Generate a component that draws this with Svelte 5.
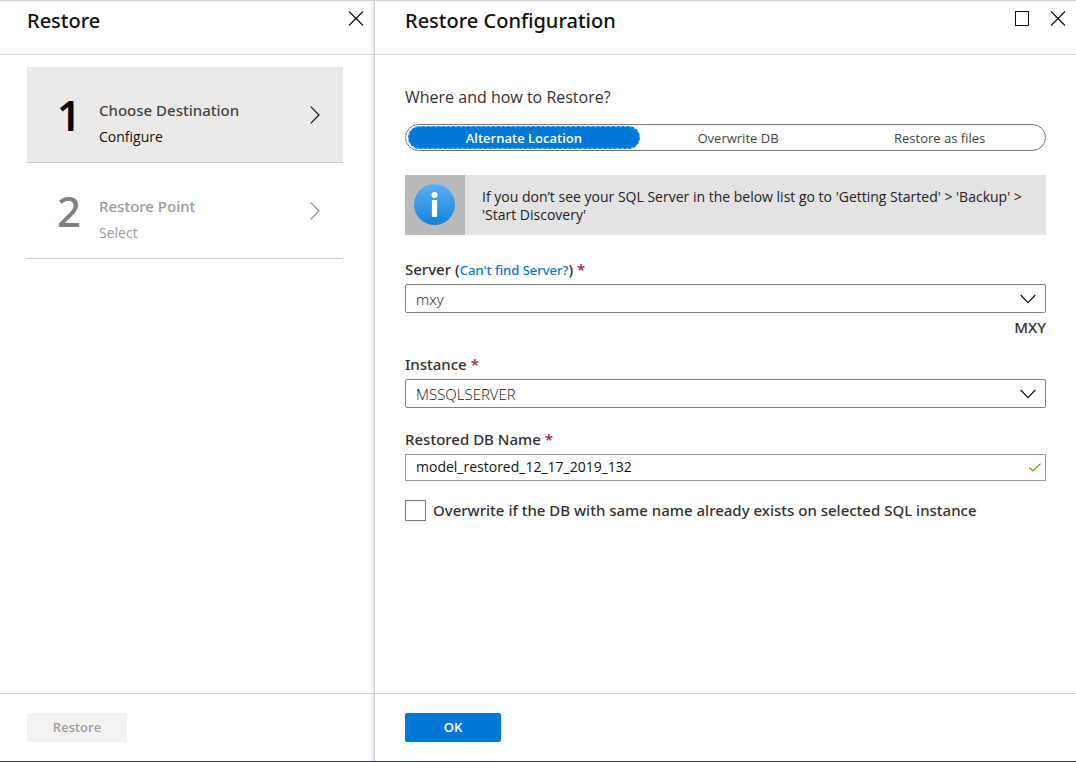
<script>
  const steps = [
    { number: 1, title: 'Choose Destination', subtitle: 'Configure', active: true },
    { number: 2, title: 'Restore Point', subtitle: 'Select', active: false }
  ];

  const locations = ['Alternate Location', 'Overwrite DB', 'Restore as files'];

  let location = 'Alternate Location';
  let server = 'mxy';
  let instance = 'MSSQLSERVER';
  let dbName = 'model_restored_12_17_2019_132';
  let overwrite = false;
</script>

<div class="portal">
  <aside class="blade steps-blade">
    <header>
      <h1>Restore</h1>
      <button class="icon-button" aria-label="Close Restore">
        <svg width="16" height="16" viewBox="0 0 16 16"><path d="M1 1.5L15 15.5M15 1.5L1 15.5" /></svg>
      </button>
    </header>

    <div class="steps">
      {#each steps as step}
        <button class="step" class:active={step.active}>
          <span class="step-number">{step.number}</span>
          <span class="step-text">
            <span class="step-title">{step.title}</span>
            <span class="step-subtitle">{step.subtitle}</span>
          </span>
          <svg width="10" height="18" viewBox="0 0 10 18"><path d="M.7 .7L9 9L.7 17.3" /></svg>
        </button>
      {/each}
    </div>

    <footer>
      <button class="action restore" disabled>Restore</button>
    </footer>
  </aside>

  <main class="blade config-blade">
    <header>
      <h1>Restore Configuration</h1>
      <button class="icon-button" aria-label="Maximize">
        <svg width="16" height="16" viewBox="0 0 16 16"><rect x="1.5" y="1.5" width="13" height="14" /></svg>
      </button>
      <button class="icon-button" aria-label="Close Restore Configuration">
        <svg width="16" height="16" viewBox="0 0 16 16"><path d="M1 1.5L15 15.5M15 1.5L1 15.5" /></svg>
      </button>
    </header>

    <form on:submit|preventDefault>
      <h2 id="where">Where and how to Restore?</h2>
      <div class="pill" role="group" aria-labelledby="where">
        {#each locations as item}
          <button
            type="button"
            class:selected={location === item}
            aria-pressed={location === item}
            on:click={() => (location = item)}>{item}</button>
        {/each}
      </div>

      <div class="info">
        <div class="info-icon">
          <svg width="42" height="42" viewBox="0 0 42 42">
            <defs>
              <linearGradient id="info-fill" x1="0" y1="0" x2="0" y2="1">
                <stop offset="0" stop-color="#5ab0f3" />
                <stop offset="1" stop-color="#1583da" />
              </linearGradient>
            </defs>
            <circle cx="20.5" cy="20.5" r="20.5" fill="url(#info-fill)" />
            <circle cx="20.5" cy="11" r="3" fill="#fff" />
            <rect x="17.9" y="16" width="5.2" height="17" rx="1" fill="#fff" />
          </svg>
        </div>
        <p>If you don’t see your SQL Server in the below list go to 'Getting Started' > 'Backup' > 'Start Discovery'</p>
      </div>

      <div class="field has-note">
        <div class="label-row">
          <label for="server">Server</label>
          <span>(<a href="#find">Can't find Server?</a>)</span>
          <span class="required">*</span>
        </div>
        <div class="control">
          <select id="server" bind:value={server}>
            <option>mxy</option>
          </select>
          <svg class="chevron" width="16" height="10" viewBox="0 0 16 10"><path d="M.7 1L8 8.6L15.3 1" /></svg>
        </div>
        <div class="note">MXY</div>
      </div>

      <div class="field">
        <div class="label-row">
          <label for="instance">Instance</label>
          <span class="required">*</span>
        </div>
        <div class="control">
          <select id="instance" bind:value={instance}>
            <option>MSSQLSERVER</option>
          </select>
          <svg class="chevron" width="16" height="10" viewBox="0 0 16 10"><path d="M.7 1L8 8.6L15.3 1" /></svg>
        </div>
      </div>

      <div class="field">
        <div class="label-row">
          <label for="db-name">Restored DB Name</label>
          <span class="required">*</span>
        </div>
        <div class="control">
          <input id="db-name" type="text" spellcheck="false" bind:value={dbName} />
          <svg class="valid" width="12" height="9" viewBox="0 0 12 9"><path d="M.5 4.5L4 8L11.5 .6" /></svg>
        </div>
      </div>

      <label class="check">
        <input type="checkbox" bind:checked={overwrite} />
        Overwrite if the DB with same name already exists on selected SQL instance
      </label>
    </form>

    <footer>
      <button class="action ok">OK</button>
    </footer>
  </main>
</div>

<style>
  :global(body) {
    margin: 0;
    background: #fff;
  }

  .portal {
    display: flex;
    box-sizing: border-box;
    min-height: 100vh;
    border-top: 1px solid #d2d2d2;
    border-bottom: 1px solid #1f4e79;
    font-family: 'Open Sans', 'Noto Sans', sans-serif;
    font-size: 14px;
    color: #323130;
  }

  button,
  input,
  select {
    font-family: inherit;
    margin: 0;
  }

  button {
    cursor: pointer;
  }

  svg {
    flex: none;
    fill: none;
    stroke: #111;
    stroke-width: 1.2;
  }

  /* Open Sans has no medium weight */
  h1,
  .step-number,
  .step-title,
  .label-row,
  .note,
  .check {
    font-family: 'Noto Sans', 'Open Sans', sans-serif;
    font-weight: 500;
  }

  .blade {
    display: flex;
    flex-direction: column;
    box-sizing: border-box;
  }

  .steps-blade {
    flex: 0 0 375px;
    border-right: 1px solid #ccc;
    box-shadow: inset -5px 0 5px -4px rgba(0, 0, 0, 0.15);
  }

  .config-blade {
    flex: 1;
    min-width: 0;
  }

  header {
    display: flex;
    align-items: flex-start;
    gap: 12px;
    box-sizing: border-box;
    height: 54px;
    padding: 5px 6px 0 27px;
    border-bottom: 1px solid #d2d2d2;
  }

  .config-blade header {
    padding-left: 30px;
  }

  h1 {
    flex: 1;
    margin: 0;
    font-size: 20px;
    line-height: 29px;
    color: #111;
  }

  .icon-button {
    display: flex;
    padding: 4px;
    border: 0;
    background: none;
  }

  .icon-button rect {
    stroke-width: 1;
  }

  .steps {
    flex: 1;
    padding: 12px 31px 0 27px;
  }

  .step {
    display: flex;
    align-items: center;
    width: 100%;
    height: 96px;
    padding: 0 23px 0 30px;
    border: 0;
    border-bottom: 1px solid #c8c8c8;
    background: none;
    color: #999;
    text-align: left;
  }

  .step.active {
    background: #ebeae8;
    color: #111;
  }

  .step svg {
    stroke: #888;
  }

  .step.active svg {
    stroke: #111;
  }

  .step-number {
    width: 42px;
    font-size: 42px;
    line-height: 48px;
    color: #808080;
  }

  .active .step-number {
    font-weight: 600;
    color: #000;
  }

  .step-text {
    display: flex;
    flex: 1;
    flex-direction: column;
    gap: 7px;
    padding-top: 18px;
    font-size: 14px;
    line-height: 20px;
  }

  .step-title {
    font-size: 15px;
  }

  .active .step-title {
    color: #444;
  }

  footer {
    box-sizing: border-box;
    height: 68px;
    padding: 19px 27px 0;
    border-top: 1px solid #d2d2d2;
  }

  .config-blade footer {
    padding-left: 30px;
  }

  .action {
    height: 29px;
    padding: 0 0 2px;
    border: 0;
    border-radius: 2px;
    font-size: 13px;
    font-weight: 600;
  }

  .restore {
    width: 100px;
    background: #f3f2f1;
    color: #a19f9d;
  }

  .ok {
    width: 96px;
    background: #0078d7;
    color: #fff;
  }

  form {
    flex: 1;
    padding: 30px 30px 0;
  }

  h2 {
    margin: 0 0 15px;
    font-size: 16px;
    line-height: 24px;
    font-weight: 400;
  }

  .pill {
    display: flex;
    box-sizing: border-box;
    height: 27px;
    padding: 1px 2px;
    border: 1px solid #777;
    border-radius: 14px;
  }

  .pill button {
    flex: 1 1 auto;
    padding: 0;
    border: 1px dashed transparent;
    border-radius: 12px;
    background: none;
    font-size: 13px;
    line-height: 20px;
    color: #444;
  }

  .pill .selected {
    border-color: #5cc8ff;
    background: #0078d7;
    color: #fff;
    font-weight: 600;
  }

  .info {
    display: flex;
    min-height: 60px;
    margin: 24px 0 25px;
    background: #e3e3e3;
  }

  .info-icon {
    display: flex;
    flex: none;
    align-items: center;
    justify-content: center;
    width: 60px;
    background: #bababa;
  }

  .info svg {
    stroke: none;
  }

  .info p {
    margin: 0;
    padding: 13px 17px 11px;
    font-size: 14px;
    line-height: 18px;
    color: #222;
  }

  .field {
    margin-bottom: 22px;
  }

  .has-note {
    margin-bottom: 18px;
  }

  .label-row {
    display: flex;
    align-items: baseline;
    gap: 4px;
    height: 20px;
    margin-bottom: 4px;
    font-size: 15px;
    line-height: 19px;
  }

  .label-row a {
    font-size: 13px;
    color: #0078d7;
    text-decoration: none;
  }

  .required {
    color: #a4262c;
  }

  .control {
    position: relative;
  }

  select,
  input[type='text'] {
    display: block;
    box-sizing: border-box;
    width: 100%;
    height: 29px;
    padding: 0 36px 0 10px;
    border: 1px solid #808080;
    border-radius: 2px;
    background: #fff;
    font-size: 15px;
    font-weight: 300;
    color: #111;
    appearance: none;
  }

  input[type='text'] {
    height: 27px;
    padding-bottom: 2px;
    border-color: #999;
    border-radius: 0;
    font-size: 14px;
    font-weight: 400;
  }

  .chevron {
    position: absolute;
    top: 10px;
    right: 10px;
    pointer-events: none;
  }

  .valid {
    position: absolute;
    top: 9px;
    right: 5px;
    stroke: #57a300;
  }

  .note {
    margin-top: 4px;
    font-size: 15px;
    line-height: 20px;
    text-align: right;
  }

  .check {
    display: flex;
    align-items: center;
    gap: 7px;
    margin-top: -3px;
    font-size: 15px;
    line-height: 21px;
  }

  .check input {
    flex: none;
    box-sizing: border-box;
    width: 21px;
    height: 21px;
    margin: 0;
    border: 1px solid #777;
    background: #fff;
    appearance: none;
  }

  .check input:checked {
    background: #0078d7;
  }
</style>
